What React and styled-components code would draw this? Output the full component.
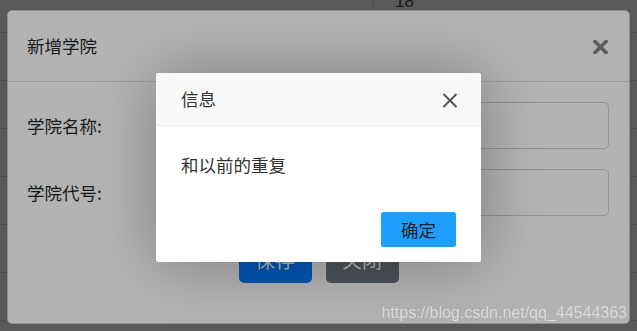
import React from 'react';
import styled, { createGlobalStyle } from 'styled-components';

const GlobalStyle = createGlobalStyle`
  html, body {
    margin: 0;
    padding: 0;
    overflow: hidden;
  }
  body {
    font-family: "Noto Sans CJK SC", "Noto Sans", "Liberation Sans", sans-serif;
  }
`;

// the page under both shades: a table, only its edges show
const Page = styled.div`
  position: relative;
  width: 637px;
  height: 331px;
  overflow: hidden;
  background-color: #595959;
`;

const TableBack = styled.div`
  display: flex;
  flex-direction: column;
  padding-top: 32px;
`;

const TableRow = styled.div`
  height: 48px;
  box-sizing: border-box;
  border-top: 1px solid #4d4d4d;
`;

const TopCells = styled.div`
  position: absolute;
  top: 0;
  left: 373px;
  height: 32px;
  display: flex;
  border-left: 1px solid #4d4d4d;
`;

const CellText = styled.span`
  margin-left: 21px;
  margin-top: -8px;
  font-family: "Liberation Sans", Arial, sans-serif;
  font-size: 17px;
  color: #1a1a1a;
`;

// bootstrap modal, seen through the second shade
const Modal = styled.div`
  position: absolute;
  left: 7px;
  top: 10px;
  width: 623px;
  height: 314px;
  box-sizing: border-box;
  background-color: #b3b3b3;
  border: 1px solid #8f8f8f;
  border-radius: 5px;
  display: flex;
  flex-direction: column;
`;

const ModalHeader = styled.div`
  display: flex;
  align-items: center;
  justify-content: space-between;
  height: 70px;
  padding: 0 21px 0 19px;
  border-bottom: 1px solid #9e9e9e;
`;

const ModalTitle = styled.div`
  font-size: 17.5px;
  line-height: 30px;
  color: #171a1d;
`;

const BoldClose = styled.svg`
  width: 15px;
  height: 14px;
  margin-top: 2px;
`;

const ModalBody = styled.div`
  display: flex;
  flex-direction: column;
  gap: 20px;
  padding: 20px 20px 0 19px;
`;

const FormRow = styled.div`
  display: flex;
  align-items: center;
  height: 47px;
`;

const Label = styled.label`
  width: 145px;
  font-size: 17.5px;
  color: #171a1d;
`;

const Input = styled.div`
  flex: 1;
  height: 100%;
  box-sizing: border-box;
  border: 1px solid #909599;
  border-radius: 5px;
`;

const ButtonBar = styled.div`
  display: flex;
  justify-content: center;
  gap: 14px;
  padding-left: 1px;
`;

const ModalButton = styled.div`
  width: 73px;
  height: 47px;
  border-radius: 5px;
  display: flex;
  align-items: center;
  justify-content: center;
  font-size: 20px;
  color: #b3b3b3;
  background-color: ${p => (p.$primary ? '#0056b3' : '#4c5258')};
`;

// layui message layer on top
const Layer = styled.div`
  position: absolute;
  left: 156px;
  top: 73px;
  width: 325px;
  background-color: #fff;
  border-radius: 2.5px;
  box-shadow: 1px 1px 62px rgba(0, 0, 0, 0.3);
  color: #333;
`;

const LayerTitle = styled.div`
  position: relative;
  height: 52px;
  line-height: 52px;
  padding-left: 25px;
  font-size: 17.5px;
  background-color: #f8f8f8;
  border-bottom: 1px solid #ececec;
  border-radius: 2.5px 2.5px 0 0;
`;

const ThinClose = styled.svg`
  position: absolute;
  right: 23px;
  top: 20px;
  width: 16px;
  height: 15px;
`;

const LayerContent = styled.div`
  padding: 24px 25px 25px;
  line-height: 30px;
  font-size: 17.5px;
`;

const LayerBtns = styled.div`
  display: flex;
  justify-content: flex-end;
  padding: 7px 25px 15px;
`;

const LayerButton = styled.div`
  width: 75px;
  height: 35px;
  line-height: 35px;
  text-align: center;
  border-radius: 2.5px;
  background-color: #1e9fff;
  color: #222;
  font-size: 17.5px;
`;

const Watermark = styled.div`
  position: absolute;
  right: 10px;
  bottom: 9px;
  font-family: "Liberation Sans", Arial, sans-serif;
  font-size: 16px;
  line-height: 18px;
  color: #dcdcdc;
  text-shadow: 0 0 1px rgba(0, 0, 0, 0.15);
`;

export default function App() {
  return (
    <Page>
      <GlobalStyle />
      <TableBack>
        {[0, 1, 2, 3, 4, 5, 6].map(i => <TableRow key={i} />)}
      </TableBack>
      <TopCells>
        <CellText>18</CellText>
      </TopCells>

      <Modal>
        <ModalHeader>
          <ModalTitle>新增学院</ModalTitle>
          <BoldClose viewBox="0 0 15 14">
            <path d="M2 1.5 L13 12.5 M13 1.5 L2 12.5" stroke="#5c5c5c" strokeWidth="3.6" strokeLinecap="square" />
          </BoldClose>
        </ModalHeader>
        <ModalBody>
          <FormRow>
            <Label>学院名称:</Label>
            <Input />
          </FormRow>
          <FormRow>
            <Label>学院代号:</Label>
            <Input />
          </FormRow>
          <ButtonBar>
            <ModalButton $primary>保存</ModalButton>
            <ModalButton>关闭</ModalButton>
          </ButtonBar>
        </ModalBody>
      </Modal>

      <Layer>
        <LayerTitle>
          信息
          <ThinClose viewBox="0 0 16 15">
            <path d="M1.5 1 L14.5 14 M14.5 1 L1.5 14" stroke="#555" strokeWidth="2" />
          </ThinClose>
        </LayerTitle>
        <LayerContent>和以前的重复</LayerContent>
        <LayerBtns>
          <LayerButton>确定</LayerButton>
        </LayerBtns>
      </Layer>

      <Watermark>https://blog.csdn.net/qq_44544363</Watermark>
    </Page>
  );
}
